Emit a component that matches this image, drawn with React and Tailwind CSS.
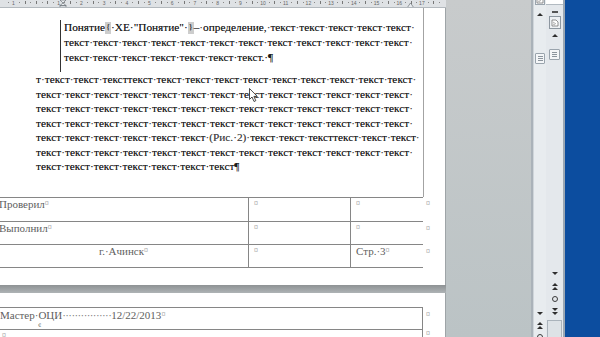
import React from "react";

const DOT = "·";

function JLine({ text, className = "" }) {
  const parts = text.split(DOT);
  const tokens = [];
  parts.forEach((p, i) => {
    if (p) tokens.push(<span key={"w" + i}>{p}</span>);
    if (i < parts.length - 1)
      tokens.push(
        <span key={"d" + i} className="text-[#555]">
          {DOT}
        </span>
      );
  });
  return <div className={"flex justify-between whitespace-nowrap " + className}>{tokens}</div>;
}

function PLine({ text }) {
  return <div className="whitespace-nowrap">{text}</div>;
}

function Brace({ ch }) {
  return (
    <span className="inline-flex w-[6px] h-[12px] items-center justify-center bg-[#cdcdcd] text-[9px] text-[#444] leading-none">
      {ch}
    </span>
  );
}

function Ruler() {
  const unit = 22.7;
  const origin = 36;
  const marks = [];
  for (let q = -6; q <= 72; q++) {
    const x = origin + (q * unit) / 4;
    if (x < 4 || x > 440) continue;
    if (q % 4 === 0 && q !== 0) {
      marks.push(
        <span
          key={q}
          className="absolute top-0 -translate-x-1/2 text-[5px] leading-[6px] text-[#666] [font-family:'Liberation_Sans',sans-serif]"
          style={{ left: x }}
        >
          {Math.abs(q / 4)}
        </span>
      );
    } else if (q % 2 === 0) {
      marks.push(<span key={q} className="absolute top-[1px] w-px h-[3px] bg-[#777]" style={{ left: x }} />);
    } else {
      marks.push(<span key={q} className="absolute top-[2px] w-px h-[1px] bg-[#888]" style={{ left: x }} />);
    }
  }
  return (
    <div className="relative w-[446px] h-[8px] shrink-0 bg-[#dfe2e5] border-b border-[#b3b9be] overflow-hidden">
      {marks}
      <svg className="absolute left-[59px] top-0" width="8" height="8" viewBox="0 0 8 8">
        <path d="M1 0 L7 0 L4 3 Z" fill="#e9ecef" stroke="#6d747a" strokeWidth="0.7" />
        <path d="M4 3 L7 5.5 L1 5.5 Z" fill="#e9ecef" stroke="#6d747a" strokeWidth="0.7" />
        <rect x="1" y="5.5" width="6" height="2.5" fill="#d3d7db" stroke="#6d747a" strokeWidth="0.7" />
      </svg>
      <svg className="absolute left-[407px] top-[3px]" width="7" height="5" viewBox="0 0 7 5">
        <path d="M3.5 0 L7 5 L0 5 Z" fill="#e9ecef" stroke="#6d747a" strokeWidth="0.7" />
      </svg>
    </div>
  );
}

function Cursor() {
  return (
    <svg className="absolute left-[249px] top-[80px]" width="10" height="15" viewBox="0 0 10 15">
      <path d="M0.5 0.5 L0.5 11.5 L3 9 L5 13.5 L6.8 12.7 L4.9 8.4 L8.3 8.4 Z" fill="#fff" stroke="#222" strokeWidth="0.8" />
    </svg>
  );
}

function Cell({ w, children, center = false, last = false }) {
  return (
    <div
      className={
        "h-full pl-[5px] pt-0 leading-[12px] whitespace-nowrap " +
        (last ? "" : "border-r border-[#868686] ") +
        (center ? "text-center pl-0 " : "")
      }
      style={{ width: w }}
    >
      {children}
    </div>
  );
}

const Mark = () => <span className="text-[8px] text-[#777] align-top">¤</span>;

function Row({ h, top = false, children }) {
  return (
    <div className="flex items-start">
      <div
        className={"flex w-[430px] border-b border-l border-[#868686] " + (top ? "border-t " : "")}
        style={{ height: h }}
      >
        {children}
      </div>
      <span className="ml-[3px] mt-[1px] text-[8px] leading-[12px] text-[#777]">¤</span>
    </div>
  );
}

const Sep = () => <span className="text-[#555]">·</span>;

function Page1() {
  return (
    <div className="relative w-[446px] h-[277px] shrink-0 bg-white border-r border-[#9ea4a7] text-[11.3px] text-[#1c1c1c] [text-shadow:0_0_0.4px_rgba(0,0,0,0.55)]">
      <div className="w-[424px] h-[189px] border-r border-[#a3a3a3] pt-[12px]">
        <div className="ml-[60px] w-[353px] h-[52px] border-l border-[#333] pl-[3px] leading-[15px]">
          <div className="flex justify-between whitespace-nowrap items-center">
            <span className="flex items-center">
              Понятие
              <Brace ch="{" />
              <span>·XE·"Понятие"·</span>
              <Brace ch="}" />
            </span>
            <span>–</span>
            <Sep />
            <span>определение,</span>
            <Sep />
            <span>текст</span>
            <Sep />
            <span>текст</span>
            <Sep />
            <span>текст</span>
            <Sep />
            <span>текст</span>
            <Sep />
            <span>текст</span>
            <Sep />
          </div>
          <JLine text={"текст·".repeat(12)} />
          <PLine text={"текст·текст·текст·текст·текст·текст·текст.·¶"} />
        </div>
        <div className="ml-[36px] w-[377px] leading-[14.5px]">
          <JLine text={"т·текст·текст·тексттекст·" + "текст·".repeat(9)} />
          <JLine text={"текст·".repeat(13)} />
          <JLine text={"текст·".repeat(13)} />
          <JLine text={"текст·".repeat(13)} />
          <div className="flex justify-between whitespace-nowrap">
            {["текст", "текст", "текст", "текст", "текст", "текст"].map((w, i) => (
              <React.Fragment key={i}>
                <span>{w}</span>
                <Sep />
              </React.Fragment>
            ))}
            <span className="text-[#4a4a4a]">(Рис.·2)</span>
            <Sep />
            <span>текст</span>
            <Sep />
            <span>текст</span>
            <Sep />
            <span>тексттекст</span>
            <Sep />
            <span>текст</span>
            <Sep />
            <span>текст</span>
            <Sep />
          </div>
          <JLine text={"текст·".repeat(13)} />
          <PLine text={"текст·текст·текст·текст·текст·текст·текст¶"} />
        </div>
      </div>
      <div className="ml-[-7px] text-[11px] text-[#5e5e5e] [text-shadow:none]">
        <Row h={25} top>
          <Cell w={255}>
            Проверил
            <Mark />
          </Cell>
          <Cell w={102}>
            <Mark />
          </Cell>
          <Cell w={72} last>
            <Mark />
          </Cell>
        </Row>
        <Row h={23}>
          <Cell w={255}>
            Выполнил
            <Mark />
          </Cell>
          <Cell w={102}>
            <Mark />
          </Cell>
          <Cell w={72} last>
            <Mark />
          </Cell>
        </Row>
        <Row h={23}>
          <Cell w={255} center>
            г.·Ачинск
            <Mark />
          </Cell>
          <Cell w={102}>
            <Mark />
          </Cell>
          <Cell w={72} last>
            Стр.·3
            <Mark />
          </Cell>
        </Row>
      </div>
      <Cursor />
    </div>
  );
}

function Page2() {
  return (
    <div className="w-[446px] h-[60px] shrink-0 bg-white border-r border-[#9ea4a7] text-[11px] text-[#5e5e5e]">
      <div className="pt-[14px] ml-[-7px]">
        <div className="flex items-start">
          <div className="w-[430px] h-[23px] border-t border-b border-l border-r border-[#868686] pl-[6px] leading-[12px] pt-[1px] whitespace-nowrap relative">
            <span>Мастер·ОЦИ</span>
            <span className="tracking-[-0.6px] text-[#777]">················</span>
            <span>12/22/2013</span>
            <Mark />
            <div className="absolute left-[44px] top-[13px] text-[7px] leading-[8px] text-[#666]">¢</div>
          </div>
          <span className="ml-[3px] mt-[2px] text-[8px] leading-[12px] text-[#777]">¤</span>
        </div>
        <div className="flex items-start">
          <div className="w-[430px] h-[24px] border-l border-r border-[#868686] pl-[8px] pt-px leading-[6px] whitespace-nowrap">
            <span className="text-[8px] text-[#777]">¤</span>
          </div>
          <span className="ml-[3px] mt-px text-[8px] leading-[6px] text-[#777]">¤</span>
        </div>
      </div>
    </div>
  );
}

const TriUp = () => (
  <div className="w-0 h-0 border-l-[3px] border-r-[3px] border-b-[3px] border-l-transparent border-r-transparent border-b-[#2e2e2e]" />
);
const TriDown = () => (
  <div className="w-0 h-0 border-l-[3px] border-r-[3px] border-t-[3px] border-l-transparent border-r-transparent border-t-[#2e2e2e]" />
);
const DblUp = () => (
  <div className="flex flex-col items-center gap-[1px]">
    <TriUp />
    <TriUp />
  </div>
);
const DblDown = () => (
  <div className="flex flex-col items-center gap-[1px]">
    <TriDown />
    <TriDown />
  </div>
);
const Circ = () => <div className="w-[6px] h-[6px] rounded-full border border-[#3a3a3a]" />;

function Thumb({ w, h }) {
  return (
    <div
      className="border border-[#9aa4ad] bg-[#f4f6f8] flex flex-col items-center justify-center gap-[1px] rounded-[1px]"
      style={{ width: w, height: h }}
    >
      <div className="w-[5px] h-px bg-[#8c959d]" />
      <div className="w-[5px] h-px bg-[#8c959d]" />
      <div className="w-[5px] h-px bg-[#8c959d]" />
    </div>
  );
}

function RulerIcon() {
  return (
    <svg width="8" height="8" viewBox="0 0 8 8">
      <path d="M1 1 L5 1 L7 3 L7 7 L1 7 Z" fill="#fff" stroke="#666" strokeWidth="0.7" />
      <path d="M2 3 L5 5 M2 5 L4 6" stroke="#777" strokeWidth="0.6" />
    </svg>
  );
}

function Scroll1() {
  return (
    <div className="w-[13px] h-full shrink-0 flex flex-col justify-between items-center bg-[#e8ecef] border-l border-[#cfd5da]">
      <div className="flex flex-col items-center">
        <div className="mt-[-4px] w-[10px] h-[9px] border border-[#9aa4ad] bg-[#f3f5f7] flex items-end justify-center">
          <RulerIcon />
        </div>
        <div className="mt-[8px]">
          <TriUp />
        </div>
        <div className="mt-[37px]">
          <Thumb w={10} h={11} />
        </div>
      </div>
      <div className="flex flex-col items-center mb-[-3px]">
        <TriDown />
        <div className="mt-[7px]">
          <DblUp />
        </div>
        <div className="mt-[5px]">
          <Circ />
        </div>
      </div>
    </div>
  );
}

function Scroll2() {
  return (
    <div className="w-[19px] h-full shrink-0 flex flex-col justify-between items-center bg-[#e4e8ec] border-r-2 border-[#9ba7b3]">
      <div className="flex flex-col items-center w-full">
        <div className="w-full h-[5px] bg-white border-b border-[#b2bac1]" />
        <div className="mt-[6px] w-[6px] h-[2px] bg-[#555]" />
        <div className="mt-[3px] w-[12px] h-[13px] border border-[#8d97a0] bg-[#eef1f4] flex items-center justify-center">
          <RulerIcon />
        </div>
        <div className="mt-[5px]">
          <TriUp />
        </div>
        <div className="mt-[12px]">
          <Thumb w={11} h={11} />
        </div>
      </div>
      <div className="flex flex-col items-center w-full mb-[-3px]">
        <TriDown />
        <div className="mt-[8px]">
          <DblUp />
        </div>
        <div className="mt-[6px]">
          <Circ />
        </div>
        <div className="mt-[6px]">
          <DblDown />
        </div>
        <div className="mt-[5px] w-[15px] h-[20px] border border-[#aab3bb] bg-[#dde2e6]" />
      </div>
    </div>
  );
}

export default function App() {
  return (
    <div className="flex w-[600px] h-[337px] overflow-hidden [font-family:'Liberation_Serif','Times_New_Roman',serif]">
      <div className="flex flex-col w-[531px] h-full shrink-0 bg-linear-to-b from-[#c8cbcc] to-[#bbc3c5]">
        <Ruler />
        <Page1 />
        <div className="w-[446px] h-[8px] shrink-0 bg-linear-to-b from-[#8e9294] to-[#aeb3b5]" />
        <Page2 />
      </div>
      <div className="w-[2px] h-full shrink-0 bg-[#aab2b9]" />
      <Scroll1 />
      <Scroll2 />
      <div className="flex-1 h-full bg-[#0c4d9f]" />
    </div>
  );
}
